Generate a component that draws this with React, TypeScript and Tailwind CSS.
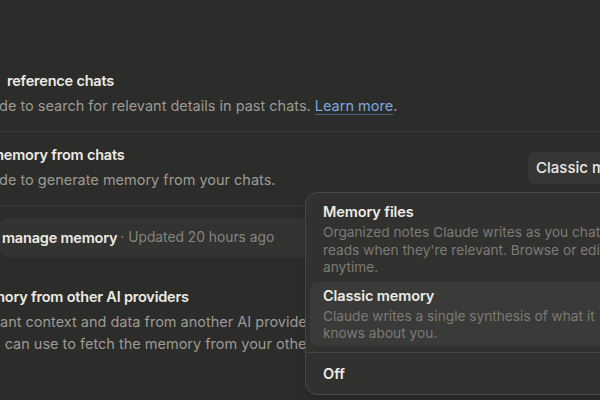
import { ChevronDown } from "lucide-react";

const font = { fontFamily: "Inter, 'Noto Sans', sans-serif" };

function Separator() {
  return <div className="h-px w-full bg-[#383836]" />;
}

export default function App() {
  return (
    <div
      className="relative w-[600px] h-[400px] overflow-hidden bg-[#2c2c2a] text-[#ecebe6]"
      style={font}
    >
      <div className="flex flex-col w-[700px]">
        {/* search and reference chats */}
        <div className="pt-[71px] pb-[14px]">
          <div className="pl-[7px] text-[14.5px] leading-[20px] font-semibold tracking-[-0.2px]">
            reference chats
          </div>
          <div className="mt-[4px] -ml-[1px] text-[14.5px] leading-[22px] text-[#9c9a94] whitespace-nowrap">
            de to search for relevant details in past chats.{" "}
            <span className="text-[#7aa7df] underline decoration-[#48658a] underline-offset-[3px]">
              Learn more
            </span>
            .
          </div>
        </div>
        <Separator />

        {/* generate memory */}
        <div className="flex items-center pt-[13px] pb-[14px]">
          <div className="w-[528px] shrink-0">
            <div className="-ml-[9px] text-[14.5px] leading-[20px] font-semibold tracking-[-0.2px]">
              memory from chats
            </div>
            <div className="mt-[4px] -ml-[1px] text-[14.5px] leading-[22px] text-[#9c9a94] whitespace-nowrap">
              de to generate memory from your chats.
            </div>
          </div>
          <button className="flex items-center gap-2 h-[32px] px-2 rounded-lg bg-[#363634] text-[15px] font-medium whitespace-nowrap">
            Classic memory
            <ChevronDown className="w-4 h-4" />
          </button>
        </div>
        <Separator />

        {/* view and manage memory */}
        <div className="mt-[12px] h-[39px] w-[320px] flex items-center bg-[#333331] rounded-lg whitespace-nowrap">
          <span className="pl-[2px] text-[14.5px] font-semibold tracking-[-0.2px]">
            manage memory
          </span>
          <span className="ml-[3px] text-[13.8px] text-[#86857f]">
            · Updated 20 hours ago
          </span>
        </div>

        {/* import memory */}
        <div className="mt-[30px]">
          <div className="-ml-[8px] text-[14.5px] leading-[20px] font-semibold tracking-[-0.2px]">
            mory from other AI providers
          </div>
          <div className="mt-[4px] text-[14.5px] leading-[22px] text-[#9c9a94] whitespace-nowrap">
            <div>ant context and data from another AI provider. Copy a prompt</div>
            <div className="-ml-[8px]">u can use to fetch the memory from your other AI</div>
          </div>
        </div>
      </div>

      {/* dropdown menu */}
      <div className="absolute left-[305px] top-[192px] w-[330px] rounded-xl border border-[#474744] bg-[#31312f] p-1 shadow-lg whitespace-nowrap">
        <div className="px-[13px] pt-[5px] pb-[4px]">
          <div className="text-[14.5px] leading-[20px] font-semibold tracking-[-0.1px]">Memory files</div>
          <div className="mt-[2px] text-[13.7px] leading-[17.5px] text-[#7c7b76]">
            Organized notes Claude writes as you chat and
            <br />
            reads when they're relevant. Browse or edit them
            <br />
            anytime.
          </div>
        </div>
        <div className="mt-px rounded-lg bg-[#3a3a38] px-[13px] pt-[4px] pb-[3px]">
          <div className="text-[14.5px] leading-[20px] font-semibold tracking-[-0.1px]">Classic memory</div>
          <div className="mt-[2px] text-[13.7px] leading-[17.5px] text-[#7c7b76]">
            Claude writes a single synthesis of what it
            <br />
            knows about you.
          </div>
        </div>
        <div className="-mx-1 mt-[6px] h-px bg-[#454542]" />
        <div className="px-[13px] pt-[11px] pb-[6px] text-[14.5px] leading-[20px] font-semibold">
          Off
        </div>
      </div>
    </div>
  );
}
